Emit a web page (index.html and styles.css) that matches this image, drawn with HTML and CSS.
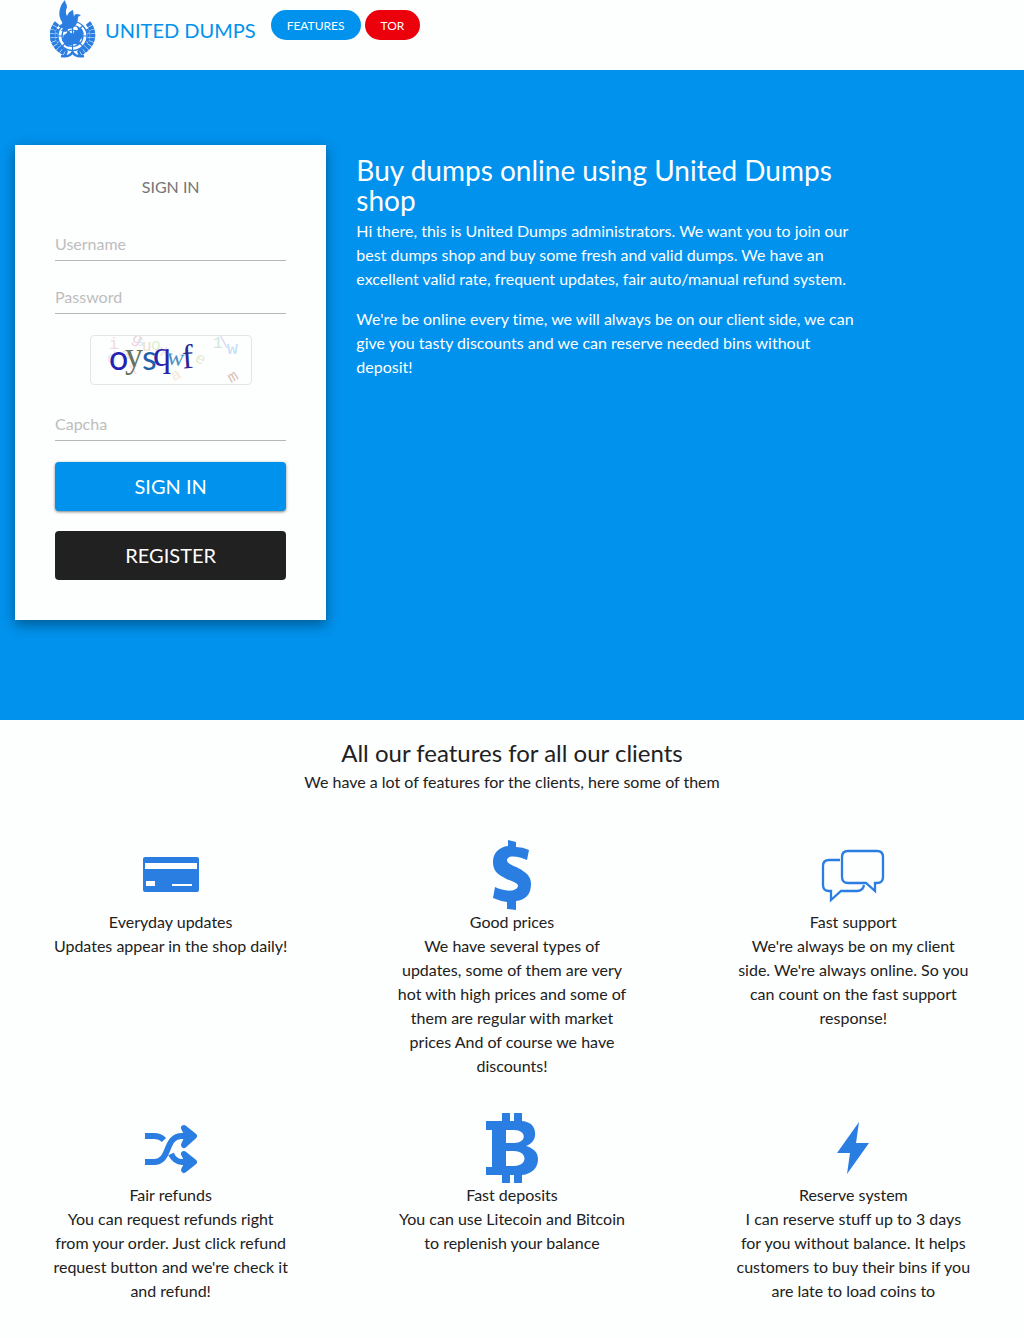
FILE: index.html
```html
<!DOCTYPE html>
<html lang="en">
<head>
<meta charset="utf-8">
<meta name="viewport" content="width=device-width, initial-scale=1">
<title>United Dumps</title>
<link rel="stylesheet" href="styles.css">
</head>
<body>
<header class="topbar">
  <a class="brand" href="#">
    <svg class="logo" viewBox="0 0 46 58" width="46" height="58" aria-hidden="true">
      <g fill="none" stroke="currentColor">
        <g stroke-width="1.2">
          <circle cx="22.500" cy="36" r="14.500"/>
          <circle cx="22.500" cy="36" r="10.500"/>
          <circle cx="22.500" cy="36" r="6"/>
          <path d="M22.500 22v28M8 36h29M12.500 26l20 20M32.500 26l-20 20"/>
        </g>
        <path d="M7 23C-1 33 1 47 17 54M38 23c8 10 6 24-10 31" stroke-width="5.500" stroke-dasharray="3.500 .5"/>
        <path d="M8 29C4 37 8 46 17 51M37 29c4 8 0 17-9 22" stroke-width="2.500" stroke-dasharray="4 .6"/>
        <path d="M11 56c6 1 10-1 11.500-4 1.500 3 5.500 5 11.500 4" stroke-width="2.500"/>
      </g>
      <g fill="currentColor">
        <path d="M14 35l5-3 4 2 2-4 6 1 2 6-3 3-1 5-5-1-4 2-3-3-5-2zM11 31l3-4 5 1-3 4zM27 27l5 2 2 5-5-2zM14 43l4 0 1 4-3-1z"/>
        <path d="M15 0C11 4 8 11 10 18c1 3 3 4 2 6l-4 2c4 3 10 4 15 2 4-3 5-7 5-11l3-2-4-1c-2 0-3 1-3 3l-1-7c-3 1-5 3-6 6-2-3-1-6 0-9 0-3-2-4-2-7z"/>
      </g>
    </svg>
    <span>UNITED DUMPS</span>
  </a>
  <nav class="links">
    <a class="pill" href="#features">FEATURES</a>
    <a class="pill pill-red" href="#">TOR</a>
  </nav>
</header>

<main>
  <section class="hero">
    <form class="card">
      <h2 class="card-title">SIGN IN</h2>
      <input class="field" type="text" placeholder="Username" aria-label="Username">
      <input class="field" type="password" placeholder="Password" aria-label="Password">
      <svg class="captcha" viewBox="0 0 160 48" width="160" height="48" role="img" aria-label="Captcha">
        <g class="noise" font-size="16">
          <text x="18" y="13" fill="#f3d9e4">i</text>
          <text x="41" y="7" fill="#eed3dc" transform="rotate(30 45 4)">g</text>
          <text x="46" y="10" fill="#d3e5f0" font-size="12">s</text>
          <text x="51" y="15" fill="#eee0d0">u</text>
          <text x="60" y="14" fill="#dcefcf">o</text>
          <text x="16" y="27" fill="#d7eff0">d</text>
          <text x="30" y="23" fill="#f2e0f0">a</text>
          <text x="37" y="38" fill="#f6dcf1">x</text>
          <text x="68" y="20" fill="#f5dde9">x</text>
          <text x="105" y="27" fill="#e4ecd0" transform="rotate(30 108 22)">e</text>
          <text x="80" y="44" fill="#f5ead9" transform="rotate(-25 84 39)">a</text>
          <text x="122" y="12" fill="#cfe8dc">1</text>
          <text x="128" y="12" fill="#dcd7ee">\</text>
          <text x="136" y="18" fill="#c3def6" font-size="18">w</text>
          <text x="137" y="46" fill="#dcc2b6" transform="rotate(-30 141 41)">m</text>
        </g>
        <g class="code">
          <text class="round" x="18" y="34" font-size="34" fill="#2420b4">o</text>
          <text x="34" y="31" font-size="36" fill="#66745f">y</text>
          <text class="round" x="51" y="34" font-size="34" fill="#1f60ac">s</text>
          <text x="62" y="30" font-size="36" fill="#2a24a8">q</text>
          <text x="76" y="29" font-size="24" fill="#4d91bd" transform="rotate(6 84 22)">w</text>
          <text x="91" y="32" font-size="34" fill="#2c2594" transform="rotate(-4 98 20)">f</text>
        </g>
      </svg>
      <input class="field" type="text" placeholder="Capcha" aria-label="Capcha">
      <button class="btn btn-primary" type="button">SIGN IN</button>
      <button class="btn btn-dark" type="button">REGISTER</button>
    </form>
    <div class="intro">
      <h1>Buy dumps online using United Dumps shop</h1>
      <p>Hi there, this is United Dumps administrators. We want you to join our best dumps shop and buy some fresh and valid dumps. We have an excellent valid rate, frequent updates, fair auto/manual refund system.</p>
      <p>We're be online every time, we will always be on our client side, we can give you tasty discounts and we can reserve needed bins without deposit!</p>
    </div>
  </section>

  <section class="features" id="features">
    <h2 class="features-title">All our features for all our clients</h2>
    <p>We have a lot of features for the clients, here some of them</p>
    <div class="grid">
      <article class="feature">
        <svg class="icon" viewBox="0 0 70 70" aria-hidden="true"><path fill="currentColor" fill-rule="evenodd" d="M9 17h52q2 0 2 2v31q0 2-2 2H9q-2 0-2-2V19q0-2 2-2zM9 23v6h52v-6zM10 41v5h9v-5zM36 44v2h20v-2z"/></svg>
        <h3>Everyday updates</h3>
        <p>Updates appear in the shop daily!</p>
      </article>
      <article class="feature">
        <svg class="icon" viewBox="0 0 70 70" aria-hidden="true"><path fill="currentColor" d="M31 0l8 2v5q7 0 13 3l-2 10C43 17 31 14 30 20c0 5 10 6 16 11 5 3 8 7 8 13 0 11-6 16-15 17v9l-9-1v-7q-7-1-14-4l2-11c8 4 21 6 23-1 0-4-9-5-15-9-6-3-10-7-10-15 0-9 6-15 15-16z"/></svg>
        <h3>Good prices</h3>
        <p>We have several types of updates, some of them are very hot with high prices and some of them are regular with market prices And of course we have discounts!</p>
      </article>
      <article class="feature">
        <svg class="icon" viewBox="0 0 70 70" aria-hidden="true"><g fill="none" stroke="currentColor" stroke-width="2.300"><path d="M30 11h29q6 0 6 6v20q0 6-6 6h-2v8l-9-8H30q-6 0-6-6V17q0-6 6-6z"/><path d="M22 20H11q-6 0-6 6v19q0 6 6 6h2v9l10-9h16q6 0 7-6"/></g></svg>
        <h3>Fast support</h3>
        <p>We're always be on my client side. We're always online. So you can count on the fast support response!</p>
      </article>
      <article class="feature">
        <svg class="icon" viewBox="0 0 70 70" aria-hidden="true"><g fill="none" stroke="currentColor" stroke-width="6"><path d="M9 23h9q6 0 10 4M9 49h9C35 49 28 23 46 23h9M35 41q4 8 11 8h9"/><path fill="currentColor" stroke-linecap="round" stroke-linejoin="round" d="M48 15l10 8-10 9 4-9zM48 41l10 8-10 8 4-8z"/></g></svg>
        <h3>Fair refunds</h3>
        <p>You can request refunds right from your order. Just click refund request button and we're check it and refund!</p>
      </article>
      <article class="feature">
        <svg class="icon" viewBox="0 0 70 70" aria-hidden="true"><path fill="currentColor" fill-rule="evenodd" d="M25 0h8v8h4V0h8v8c10 1 14 7 13 15-1 5-4 8-9 10 7 2 12 6 12 13 0 9-6 15-16 16v8h-8v-8h-4v8h-8v-8H9v-8h6V17H9V8h16zM29 17v13h8c13 0 13-13 0-13zM29 38v15h8c14 0 14-15 0-15z"/></svg>
        <h3>Fast deposits</h3>
        <p>You can use Litecoin and Bitcoin to replenish your balance</p>
      </article>
      <article class="feature">
        <svg class="icon" viewBox="0 0 70 70" aria-hidden="true"><path fill="currentColor" d="M41 9L38 30h13L29 61l3-21H19z"/></svg>
        <h3>Reserve system</h3>
        <p>I can reserve stuff up to 3 days for you without balance. It helps customers to buy their bins if you are late to load coins to</p>
      </article>
    </div>
  </section>
</main>
</body>
</html>
```
FILE: styles.css
```css
* {
  box-sizing: border-box;
}

body {
  margin: 0;
  background: #fdfefe;
  color: #212121;
  font: 16px/24px Lato, sans-serif;
  font-variant-ligatures: none;
}

h1, h2, h3, p {
  margin: 0;
  font-weight: 400;
}

.topbar {
  display: flex;
  align-items: flex-start;
  min-height: 70px;
  padding-left: 50px;
}

.brand {
  display: flex;
  align-items: center;
  gap: 9px;
  color: #0092ed;
  font-size: 20px;
  text-decoration: none;
}

.brand span {
  padding-top: 2px;
}

.logo {
  color: #2a7de1;
}

.links {
  display: flex;
  gap: 4px;
  padding: 10px 15px;
}

.pill {
  padding: 2px 16px 0;
  border-radius: 15px;
  background: #0092ed;
  color: #fff;
  font-size: 12px;
  line-height: 28px;
  text-decoration: none;
}

.pill-red {
  background: #eb000b;
}

.hero {
  display: grid;
  grid-template-columns: 1fr 2fr;
  align-items: start;
  padding: 75px 0 100px;
  background: #0092ed;
}

.card {
  display: flex;
  flex-direction: column;
  gap: 20px;
  margin: 0 15px;
  padding: 30px 40px 40px;
  background: #fdfefe;
  box-shadow: 0 5px 11px rgba(0, 0, 0, .25), 0 4px 15px rgba(0, 0, 0, .15);
}

.card-title {
  margin-bottom: 9px;
  color: #757575;
  font-size: 16px;
  line-height: 24px;
  text-align: center;
}

.field {
  width: 100%;
  height: 33px;
  padding: 0 0 2px;
  border: 0;
  border-bottom: 1px solid #b5b8b8;
  background: none;
  color: #212121;
  font: inherit;
}

.field::placeholder {
  color: #bdbdbd;
  opacity: 1;
}

.captcha {
  box-sizing: content-box;
  align-self: center;
  margin: 1px 0 3px;
  border: 1px solid #e1e5e5;
  border-radius: 4px;
}

.noise {
  font-family: "Liberation Mono", monospace;
}

.code {
  font-family: "Liberation Serif", serif;
}

.round {
  font-family: Lato, sans-serif;
}

.btn {
  height: 49px;
  padding: 0 0 2px;
  border: 0;
  border-radius: 4px;
  color: #fff;
  font: 20px/24px Lato, sans-serif;
}

.btn-primary {
  margin-top: 1px;
  background: #0092ed;
  box-shadow: 0 1px 3px rgba(0, 0, 0, .5);
}

.btn-dark {
  background: #212121;
}

.intro {
  max-width: 531px;
  padding: 10px 15px;
  color: #fff;
}

.intro h1 {
  margin-bottom: 4px;
  font-size: 28px;
  line-height: 30px;
}

.intro p + p {
  margin-top: 16px;
}

.features {
  padding: 16px 0 35px;
  text-align: center;
}

.features-title {
  font-size: 24px;
  line-height: 34px;
}

.grid {
  display: grid;
  grid-template-columns: repeat(3, 1fr);
  gap: 35px 0;
  margin-top: 46px;
}

.feature {
  padding: 0 52px;
}

.feature h3 {
  font-size: 16px;
  line-height: 24px;
}

.icon {
  display: block;
  width: 70px;
  height: 70px;
  margin: 0 auto;
  color: #2a7de1;
}
```
